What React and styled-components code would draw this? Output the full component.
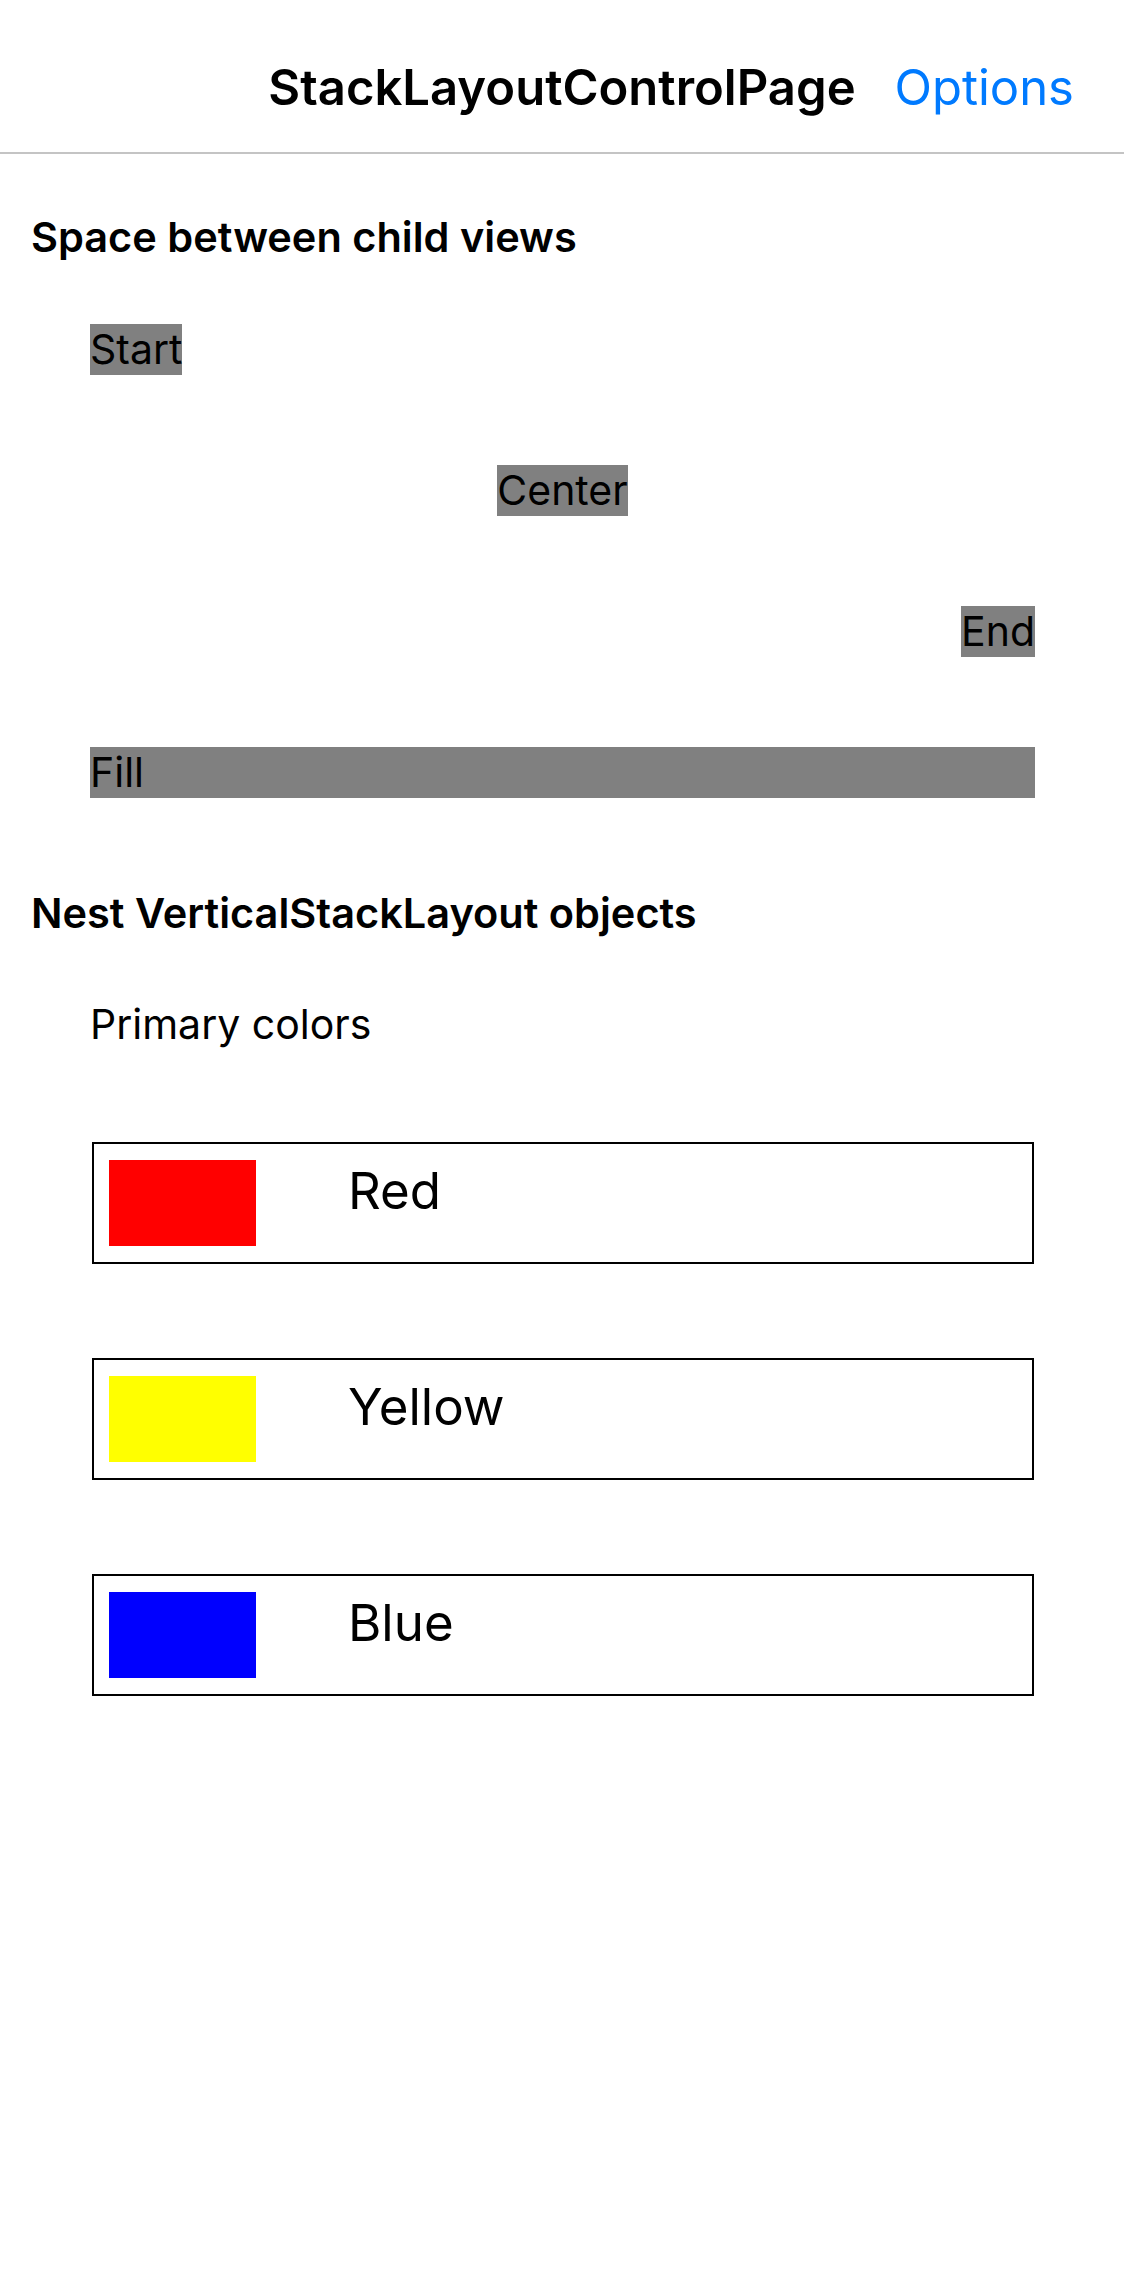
import React from "react";
import styled, { createGlobalStyle } from "styled-components";

const Global = createGlobalStyle`
  html, body { margin: 0; padding: 0; background: #ffffff; }
  body { font-family: Inter, "Liberation Sans", "Noto Sans", sans-serif; color: #000; }
  * { box-sizing: border-box; }
`;

const Page = styled.div`
  width: 1124px;
  min-height: 2286px;
  background: #ffffff;
`;

const NavBar = styled.header`
  display: grid;
  grid-template-columns: 1fr auto 1fr;
  align-items: start;
  height: 154px;
  padding: 58px 50px 0 50px;
  border-bottom: 2px solid #c4c4c4;
`;

const NavTitle = styled.h1`
  grid-column: 2;
  margin: 0;
  font-size: 49px;
  line-height: 60px;
  font-weight: 600;
`;

const NavAction = styled.span`
  grid-column: 3;
  justify-self: end;
  font-size: 49px;
  line-height: 60px;
  font-weight: 400;
  color: #007aff;
`;

const Content = styled.main`
  display: flex;
  flex-direction: column;
  padding: 58px 89px 0 31px;
`;

const Heading = styled.h2`
  margin: ${(p) => p.$top || 0}px 0 0 0;
  font-size: 41.5px;
  line-height: 51px;
  font-weight: 600;
`;

const Stack = styled.div`
  display: flex;
  flex-direction: column;
  gap: ${(p) => p.$gap}px;
  margin: ${(p) => p.$top}px 0 0 59px;
`;

const TagLabel = styled.span`
  align-self: ${(p) => p.$align};
  background: #808080;
  font-size: 41px;
  line-height: 51px;
  color: #000;
  white-space: nowrap;
`;

const Caption = styled.span`
  font-size: 41px;
  line-height: 51px;
`;

const ColorList = styled.div`
  display: flex;
  flex-direction: column;
  gap: 94px;
  margin-top: 92px;
  padding: 0 1px 0 2px;
`;

const ColorRow = styled.div`
  display: flex;
  align-items: flex-start;
  height: 122px;
  padding: 16px 15px;
  border: 2px solid #000;
`;

const Swatch = styled.div`
  width: 147px;
  height: 86px;
  background: ${(p) => p.$color};
  flex: none;
`;

const ColorName = styled.span`
  margin-left: 92px;
  font-size: 51px;
  line-height: 62px;
  font-weight: 400;
`;

const colors = [
  { name: "Red", value: "#ff0000" },
  { name: "Yellow", value: "#ffff00" },
  { name: "Blue", value: "#0000ff" },
];

export default function App() {
  return (
    <Page>
      <Global />
      <NavBar>
        <NavTitle>StackLayoutControlPage</NavTitle>
        <NavAction>Options</NavAction>
      </NavBar>
      <Content>
        <Heading>Space between child views</Heading>
        <Stack $gap={90} $top={61}>
          <TagLabel $align="flex-start">Start</TagLabel>
          <TagLabel $align="center">Center</TagLabel>
          <TagLabel $align="flex-end">End</TagLabel>
          <TagLabel $align="stretch">Fill</TagLabel>
        </Stack>
        <Heading $top={90}>Nest VerticalStackLayout objects</Heading>
        <Stack $gap={0} $top={60}>
          <Caption>Primary colors</Caption>
          <ColorList>
            {colors.map((c) => (
              <ColorRow key={c.name}>
                <Swatch $color={c.value} />
                <ColorName>{c.name}</ColorName>
              </ColorRow>
            ))}
          </ColorList>
        </Stack>
      </Content>
    </Page>
  );
}
